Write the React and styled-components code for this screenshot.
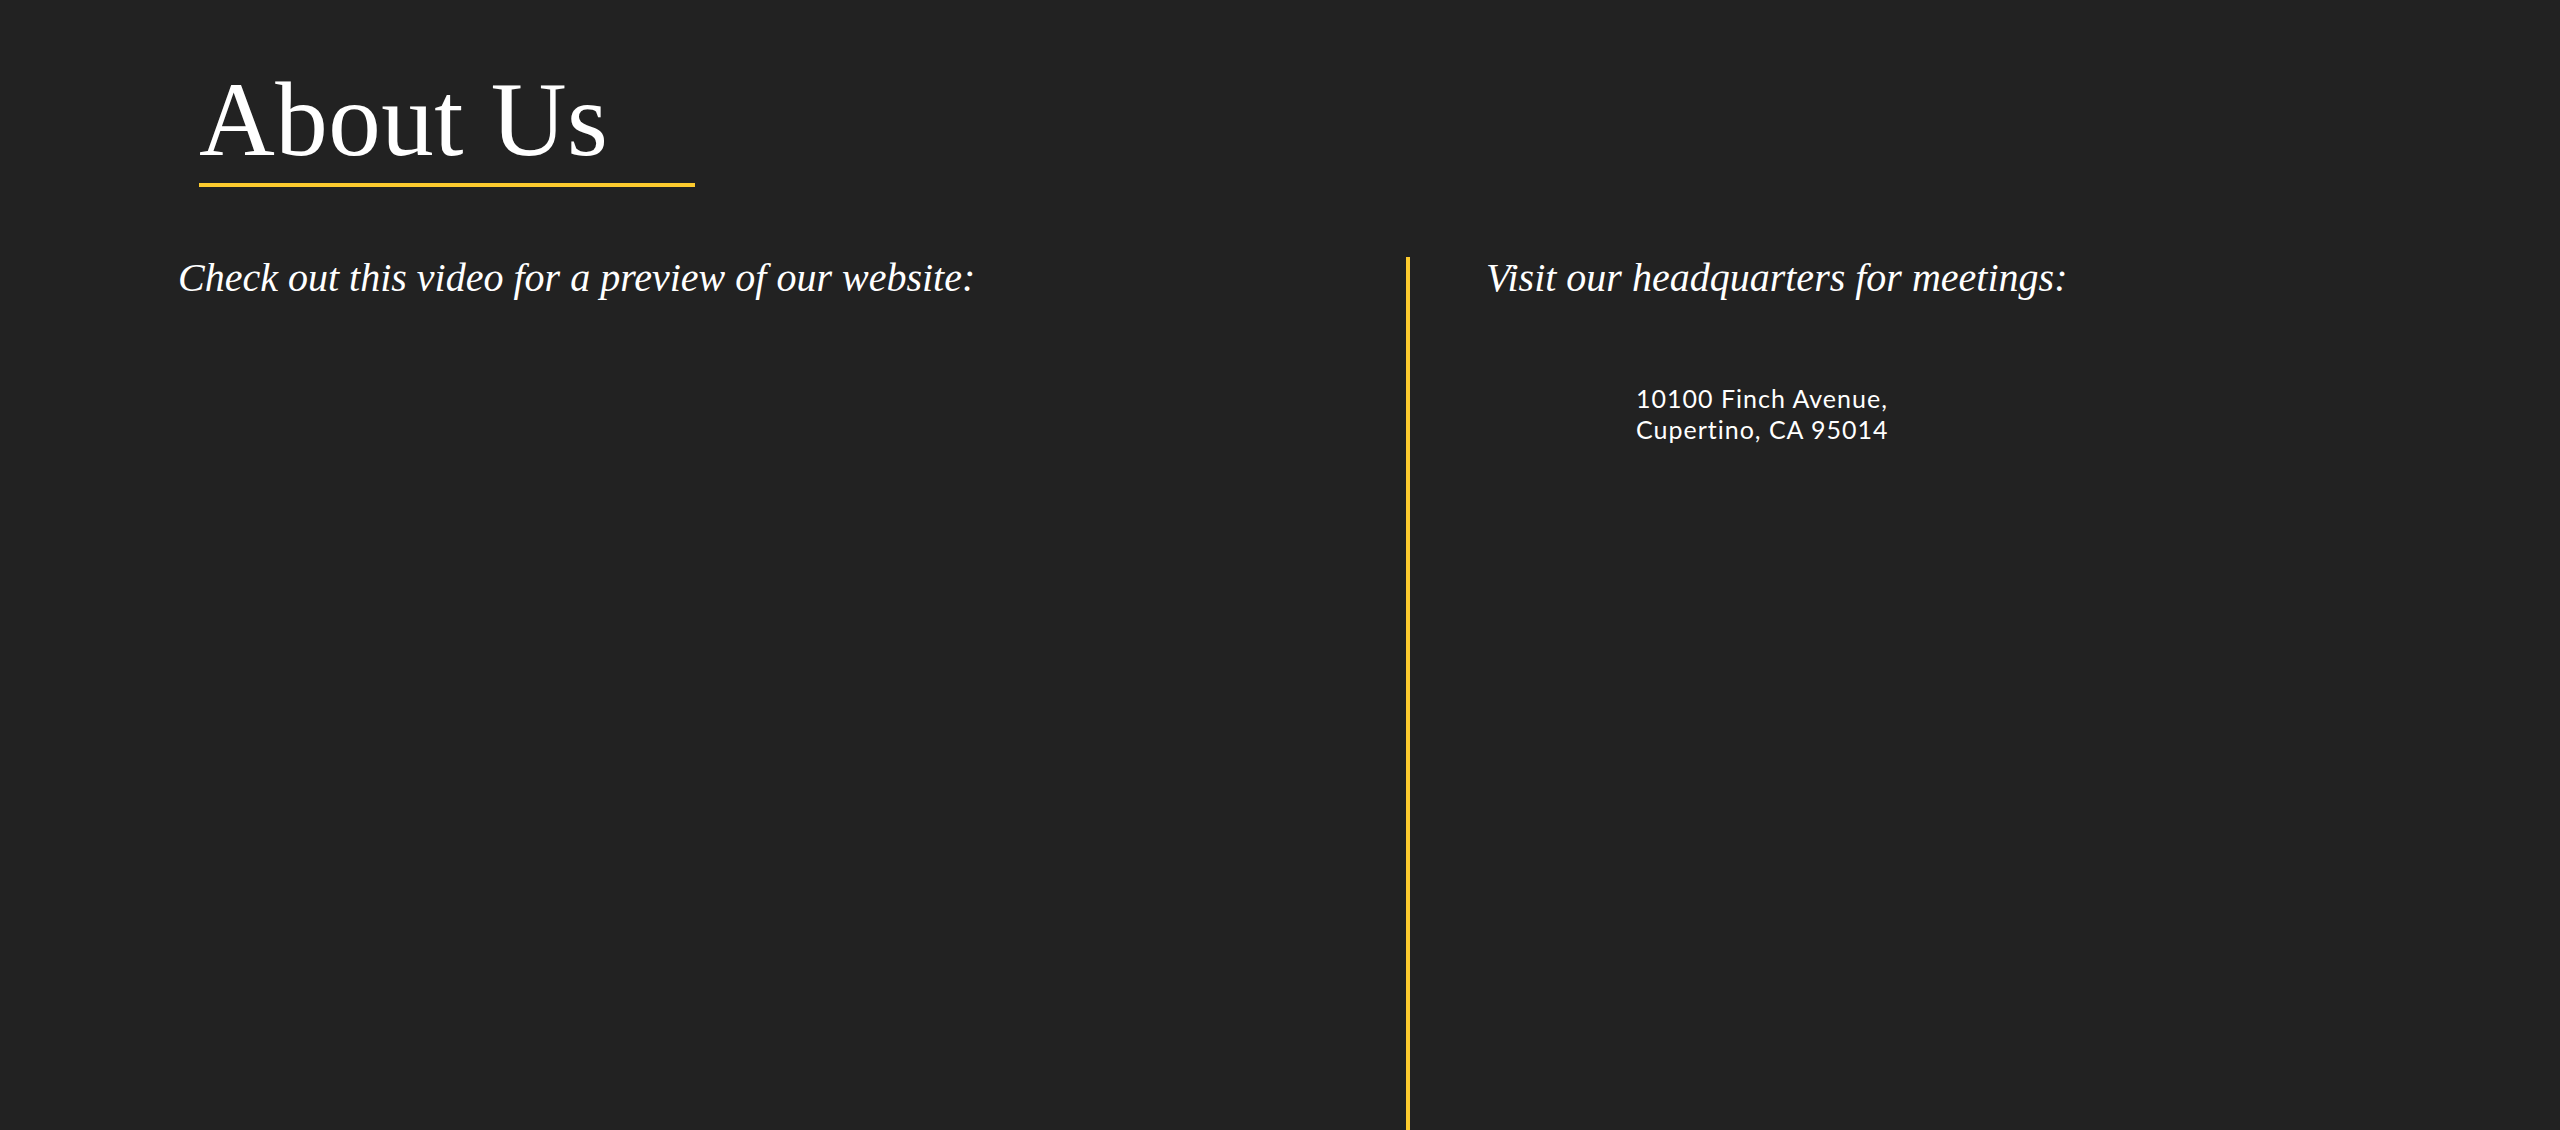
import React from 'react';
import styled, { createGlobalStyle } from 'styled-components';

const colors = {
  bg: '#222222',
  white: '#ffffff',
  yellow: '#fdcb2e',
};

const GlobalStyle = createGlobalStyle`
  html, body {
    margin: 0;
    padding: 0;
    background: ${colors.bg};
  }
  body {
    height: 1130px;
    overflow: hidden;
  }
`;

const Page = styled.main`
  min-height: 1130px;
  background: ${colors.bg};
  color: ${colors.white};
  padding-top: 67px;
  box-sizing: border-box;
`;

const Header = styled.header`
  padding-left: 199px;
`;

const Title = styled.h1`
  display: inline-block;
  margin: 0;
  width: 496px;
  padding-bottom: 11px;
  border-bottom: 4px solid ${colors.yellow};
  font-family: 'Liberation Serif', 'DejaVu Serif', serif;
  font-weight: 400;
  font-size: 105px;
  line-height: 105px;
  letter-spacing: 0.5px;
`;

const Columns = styled.section`
  display: grid;
  grid-template-columns: 1228px 4px 1fr;
  margin-top: 70px;
  padding-left: 178px;
  height: 874px;
`;

const Column = styled.div`
  padding-left: ${({ $inset }) => $inset || 0}px;
`;

const Divider = styled.div`
  background: ${colors.yellow};
`;

const Subtitle = styled.h2`
  margin: 0;
  padding-top: 1px;
  font-family: 'Liberation Serif', 'DejaVu Serif', serif;
  font-style: italic;
  font-weight: 400;
  font-size: 40px;
  line-height: 39px;
`;

const Address = styled.address`
  margin: 86px 0 0 150px;
  font-style: normal;
  font-family: Lato, 'Open Sans', sans-serif;
  font-size: 25px;
  line-height: 31px;
  letter-spacing: 1px;
`;

const App = () => {
  return (
    <React.Fragment>
      <GlobalStyle />
      <Page>
        <Header>
          <Title>About Us</Title>
        </Header>
        <Columns>
          <Column>
            <Subtitle>Check out this video for a preview of our website:</Subtitle>
          </Column>
          <Divider />
          <Column $inset={76}>
            <Subtitle>Visit our headquarters for meetings:</Subtitle>
            <Address>
              10100 Finch Avenue,
              <br />
              Cupertino, CA 95014
            </Address>
          </Column>
        </Columns>
      </Page>
    </React.Fragment>
  );
};

export default App;
